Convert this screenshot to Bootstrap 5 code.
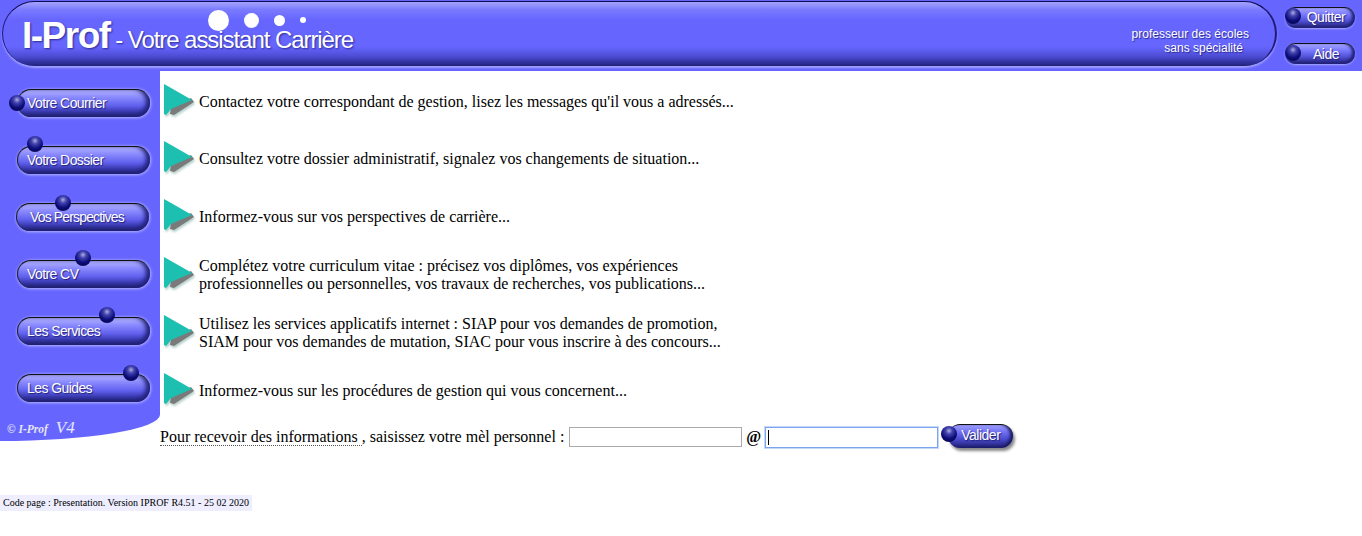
<!DOCTYPE html>
<html lang="fr"><head><meta charset="utf-8"><title>I-Prof</title>
<link href="https://cdn.jsdelivr.net/npm/bootstrap@5.3.0/dist/css/bootstrap.min.css" rel="stylesheet">
<style>
body{font-family:"Liberation Serif",serif;font-size:16px;color:#000;background:#fff;line-height:18px;height:536px;overflow:hidden}
.topbar{height:71px;background:#6666ff}
.pill{width:1275px;height:65px;margin:1px 0 0 2px;border-radius:33px;border-top:1px solid #110a55;border-left:1px solid #221a77;border-right:2px solid #221a77;background:linear-gradient(#a4a4ff 0,#7a7aff 12%,#6666ff 28%,#6666ff 70%,#4a4ad0 86%,#20207a 100%);box-shadow:0 2px 2px #a0a0ff;padding-left:19px;position:relative}
.brand{font-family:"Liberation Sans",sans-serif;color:#fff;text-shadow:1px 1px 2px #2a2a90;white-space:nowrap;padding-top:10px}
.brand b{font-size:37px;line-height:48px;letter-spacing:-1.5px}
.brand span{font-size:24px;letter-spacing:-1.06px}
.dot{position:absolute;background:#fff;border-radius:50%}
.d1{left:205px;top:8px;width:21px;height:21px}
.d2{left:241px;top:11px;width:15px;height:15px}
.d3{left:271px;top:13px;width:11px;height:11px}
.d4{left:297px;top:15px;width:6px;height:6px}
.who{font-family:"Liberation Sans",sans-serif;font-size:12px;line-height:14px;color:#fff;text-shadow:1px 1px 1px #2a2a90;position:absolute;right:26px;top:25px;text-align:right}
.who span{display:block}
.who .l2{margin-right:6px}
.topbtns{width:85px;padding:7px 0 0 8px;gap:15px}
.sidebar{width:160px;height:370px;background:#6666ff;border-bottom-right-radius:170px 28px;flex:none;position:relative}
.mbtn{display:block;position:relative;height:28px;width:133px;border-radius:14px;border-top:1px solid #111;border-left:1px solid #222;font-family:"Liberation Sans",sans-serif;font-size:14px;letter-spacing:-.58px;line-height:26px;color:#fff;text-decoration:none;text-shadow:1px 1px 1px #222277;background:linear-gradient(#b4b4ff 0,#8c8cff 25%,#6060ee 58%,#3a3ab0 80%,#1b1b66 100%);box-shadow:0 1px 3px #a8a8ff,1px 0 3px #a8a8ff,inset -4px -1px 4px #22227a;white-space:nowrap;padding-left:9px}
.mbtn:hover,.sbtn:hover,.topbtn:hover{color:#fff}
.mbtn.persp{margin-left:-1px;padding-left:13px;letter-spacing:-.85px}
.ball{position:absolute;width:16px;height:16px;border-radius:50%;background:radial-gradient(circle at 50% 30%,#aeaee0 0,#4444b0 24%,#0c0c78 58%,#04043a 100%)}
.b1{left:-9px;top:5px}.b2{left:9px;top:-11px}.b3{left:38px;top:-9px}.b4{left:57px;top:-11px}.b5{left:81px;top:-11px}.b6{left:105px;top:-10px}
.bq{left:0;top:0}.ba{left:0;top:1px}.bv{left:-7px;top:1px}
.sidemenu{padding:18px 0 0 17px;gap:29px}
.copy{position:absolute;left:7px;bottom:3px;font-family:"Liberation Serif",serif;font-style:italic;font-weight:700;font-size:11.5px;color:#e4e4f4;white-space:nowrap;line-height:18px}
.copy i{font-weight:400;font-size:17px;margin-left:8px;color:#e8e8ff}
.inforow{height:58px;padding-left:3px;gap:4px}
.inforow:first-child{height:57px}
.inforow svg{flex:none;filter:drop-shadow(1px 2px 1px rgba(120,170,160,.55))}
.infos{padding-top:2px}
.mailrow{height:22px;gap:4px;margin-top:6px;white-space:nowrap}
.dotted{border-bottom:1px dotted #555}
.mailtext{margin-right:1px}
.mailinput{width:173px;height:20px;border:1px solid #aaa;background:#fff;padding:0 1px;outline:0}
.mailinput.on{height:21px;border:1px solid #7aa5ee;box-shadow:0 0 0 1px #c4d8f8;background:linear-gradient(#000,#000) 2px 2px/1px 15px no-repeat #fff}
.sbtn{display:block;position:relative;width:65px;height:24px;border-radius:12px;margin:0 0 2px 6px;font-family:"Liberation Sans",sans-serif;font-size:14px;letter-spacing:-.5px;line-height:21px;color:#fff;text-decoration:none;text-shadow:1px 1px 1px #222277;padding-left:13px;background:linear-gradient(#a0a0ff 0,#7272f2 30%,#4c4cd0 60%,#1e1e70 100%);border-top:1px solid #111;box-shadow:2px 3px 3px #888,inset -3px -1px 3px #1c1c66}
.topbtn{display:block;position:relative;width:70px;height:21px;border-radius:11px;font-family:"Liberation Sans",sans-serif;font-size:14px;letter-spacing:-.5px;line-height:19px;color:#fff;text-align:center;text-decoration:none;text-shadow:1px 1px 1px #222277;padding-left:12px;background:linear-gradient(#a5a5ff 0,#7c7cff 30%,#5454dc 62%,#1e1e70 100%);border-top:1px solid #111;box-shadow:0 1px 2px #a8a8ff,inset -3px -1px 3px #22227a}
.topbtn:last-child{line-height:21px}
.codepage{font-size:10px;line-height:16px;background:#eeeeff;width:252px;padding-left:3px;margin-top:47px;white-space:nowrap}
</style></head><body>
<svg width="0" height="0" class="position-absolute"><defs><g id="arrow"><polygon points="8,25 28,15 31,19 11,32 7,31" fill="#7a7a7a"/><polygon points="1,1 29,17 8,26 3,32 1,31" fill="#1dbfb0"/></g></defs></svg>
<header class="topbar d-flex">
  <div class="pill">
    <div class="brand"><b>I-Prof</b><span> - Votre assistant Carrière</span></div>
    <i class="dot d1"></i><i class="dot d2"></i><i class="dot d3"></i><i class="dot d4"></i>
    <div class="who"><span>professeur des écoles</span><span class="l2">sans spécialité</span></div>
  </div>
  <div class="topbtns d-flex flex-column ms-auto">
    <a class="topbtn" href="#"><i class="ball bq"></i>Quitter</a>
    <a class="topbtn" href="#"><i class="ball ba"></i>Aide</a>
  </div>
</header>
<div class="d-flex">
  <nav class="sidebar">
    <div class="sidemenu d-flex flex-column">
      <a class="mbtn" href="#"><i class="ball b1"></i>Votre Courrier</a>
      <a class="mbtn" href="#"><i class="ball b2"></i>Votre Dossier</a>
      <a class="mbtn persp" href="#"><i class="ball b3"></i>Vos Perspectives</a>
      <a class="mbtn" href="#"><i class="ball b4"></i>Votre CV</a>
      <a class="mbtn" href="#"><i class="ball b5"></i>Les Services</a>
      <a class="mbtn" href="#"><i class="ball b6"></i>Les Guides</a>
    </div>
    <div class="copy">© I-Prof<i>V4</i></div>
  </nav>
  <main class="flex-grow-1">
    <div class="infos">
      <div class="inforow d-flex align-items-center"><svg width="32" height="38" viewBox="0 0 32 38"><use href="#arrow"/></svg><span>Contactez votre correspondant de gestion, lisez les messages qu'il vous a adressés...</span></div>
      <div class="inforow d-flex align-items-center"><svg width="32" height="38" viewBox="0 0 32 38"><use href="#arrow"/></svg><span>Consultez votre dossier administratif, signalez vos changements de situation...</span></div>
      <div class="inforow d-flex align-items-center"><svg width="32" height="38" viewBox="0 0 32 38"><use href="#arrow"/></svg><span>Informez-vous sur vos perspectives de carrière...</span></div>
      <div class="inforow d-flex align-items-center"><svg width="32" height="38" viewBox="0 0 32 38"><use href="#arrow"/></svg><span>Complétez votre curriculum vitae : précisez vos diplômes, vos expériences<br>professionnelles ou personnelles, vos travaux de recherches, vos publications...</span></div>
      <div class="inforow d-flex align-items-center"><svg width="32" height="38" viewBox="0 0 32 38"><use href="#arrow"/></svg><span>Utilisez les services applicatifs internet : SIAP pour vos demandes de promotion,<br>SIAM pour vos demandes de mutation, SIAC pour vous inscrire à des concours...</span></div>
      <div class="inforow d-flex align-items-center"><svg width="32" height="38" viewBox="0 0 32 38"><use href="#arrow"/></svg><span>Informez-vous sur les procédures de gestion qui vous concernent...</span></div>
    </div>
    <form class="mailrow d-flex align-items-center">
      <span class="mailtext"><span class="dotted">Pour recevoir des informations </span>, saisissez votre mèl personnel :</span>
      <input class="mailinput" type="text" aria-label="mèl">
      <b>@</b>
      <input class="mailinput on" type="text" aria-label="domaine">
      <a class="sbtn" href="#"><i class="ball bv"></i>Valider</a>
    </form>
  </main>
</div>
<footer class="codepage">Code page : Presentation. Version IPROF R4.51 - 25 02 2020</footer>
</body></html>
